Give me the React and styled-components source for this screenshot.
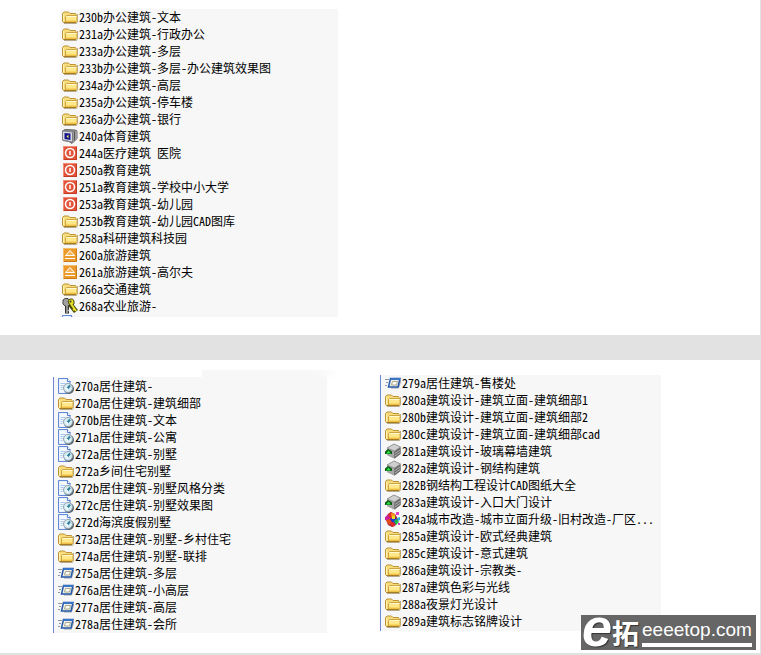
import React from "react";
import styled, { createGlobalStyle } from "styled-components";

const GlobalStyle = createGlobalStyle`
  * {
    box-sizing: border-box;
  }
  body {
    margin: 0;
    background-color: #ffffff;
  }
`;

const Page = styled.main`
  border-right: 1px solid #e2e2e2;
  border-bottom: 2px solid #e2e2e2;
  color: #000000;
  font-family: "Noto Sans Mono CJK SC", "Noto Sans CJK SC", monospace;
`;

const TopSection = styled.section`
  padding: 9px 60px 18px;
`;

const Divider = styled.div`
  height: 25px;
  background-color: #e2e2e2;
`;

const BottomSection = styled.section`
  position: relative;
  display: flex;
  align-items: flex-start;
  gap: 53px;
  padding: 10px 53px 20px;
`;

const Column = styled.div`
  flex: none;
  padding-top: ${(props) => props.$top || 0}px;
`;

const Strip = styled.div`
  width: 135px;
  height: 7px;
  margin: 0 -10px 0 auto;
  background: linear-gradient(to right, #f7f7f7 85%, #ffffff);
`;

const Panel = styled.ul`
  width: ${(props) => props.$width}px;
  margin: 0;
  padding: ${(props) => props.$pad};
  list-style: none;
  background-color: #f7f7f7;
  border-left: ${(props) => (props.$line ? "1px solid #6f86d6" : "none")};
`;

const Row = styled.li`
  display: flex;
  align-items: flex-start;
  gap: 1px;
  height: 17px;
  font-size: 12px;
  line-height: 16px;
  white-space: pre;
`;

const NextRow = styled.li`
  height: 2px;
  overflow: hidden;
`;

const Icon = styled.svg`
  display: block;
  flex: none;
  width: 16px;
  height: 16px;
`;

const Logo = styled.div`
  position: absolute;
  right: 4px;
  bottom: 3px;
  display: flex;
  align-items: center;
  gap: 3px;
  width: 175px;
  height: 35px;
  padding-left: 1px;
  background-color: #666666;
  color: #ffffff;
`;

const LogoMark = styled.span`
  width: 27px;
  font: italic bold 54px/36px "Liberation Sans", sans-serif;
  height: 48px;
  text-shadow: 1px 1px 1px #333333;
`;

const LogoHan = styled.span`
  font: bold 27px/35px "Noto Sans CJK SC", sans-serif;
  text-shadow: 1px 1px 1px #333333;
`;

const LogoUrl = styled.span`
  height: 29px;
  font: 19px/24px "Liberation Sans", sans-serif;
  border-bottom: 4px solid #ffffff;
`;

function Folder() {
  return (
    <Icon viewBox="0 0 16 16">
      <path d="M2 14.500h12.500l1-2V5" fill="none" stroke="#b5aa90" />
      <path d="M.5 12V4.500L2 3h4.500L8 4.500h5.500l.5 1V13l-1 .5H1.500l-1-1z" fill="#f7dc7c" stroke="#bd9235" />
      <path d="M1.500 5v7.500" stroke="#fff2b4" />
      <path d="M4.500 6.500H15V12l-1 1.500H3.500v-6z" fill="#ffe88a" stroke="#cfa544" />
      <path d="M4.500 7.500h10" stroke="#fff8cc" />
      <path d="M4 11.500h10.500" stroke="#f8d768" />
      <path d="M4 12.500h10" stroke="#efc048" />
      <path d="M1.500 13.500H14" stroke="#a67c20" />
    </Icon>
  );
}

function Monitor() {
  return (
    <Icon viewBox="0 0 16 16">
      <path d="M.5 3L3 1.500 13 2l2 1v7.500L10 15.500l-3-2-6-1z" fill="#8a8a8a" stroke="#666" />
      <path d="M10.500 4L15 3v8l-4.500 4z" fill="#9c9c9c" />
      <path d="M12.500 3.500v9" stroke="#555" />
      <path d="M.5 3L10.500 4v10l-10-2z" fill="#dcdce4" stroke="#808088" />
      <path d="M2.500 5l6 .5V12l-6-1z" fill="#14148c" />
      <path d="M6.500 6.500L4.500 8.500l2 2z" fill="#e8e04a" />
    </Icon>
  );
}

function Power() {
  return (
    <Icon viewBox="0 0 16 16">
      <rect x="1" y="1" width="14" height="14" rx="1" fill="#e2533a" />
      <path d="M1.500 14V1.500H14" stroke="#f08a72" fill="none" />
      <path d="M14.500 2v12.500H2" stroke="#c23a22" fill="none" />
      <circle cx="8" cy="8" r="4.500" fill="none" stroke="#fff" strokeWidth="1.500" />
      <path d="M8 6v4" stroke="#fff" strokeWidth="1.500" />
    </Icon>
  );
}

function Eject() {
  return (
    <Icon viewBox="0 0 16 16">
      <rect x="1" y="1" width="14" height="14" rx="1" fill="#eb9a2b" />
      <path d="M1.500 14V1.500H14" stroke="#f5bd6a" fill="none" />
      <path d="M14.500 2v12.500H2" stroke="#cc7a12" fill="none" />
      <path d="M8 3.500l4.500 5h-9z" fill="#f3b65c" stroke="#fff" />
      <path d="M3 11.500h10" stroke="#fff" />
    </Icon>
  );
}

function Keys() {
  return (
    <Icon viewBox="0 0 16 16">
      <path d="M5 5v10.500" stroke="#333" strokeWidth="4" />
      <path d="M1 2l2-1.500h3L8 3v3L6 8H3L1 6z" fill="#a0a0a0" stroke="#444" />
      <path d="M5 7v8M5 12.500h2" stroke="#aaa" strokeWidth="1.500" />
      <path d="M8 6l6 7.500" stroke="#4c480a" strokeWidth="5" />
      <path d="M6 2.500L8 1h2.500L12 3v3L9.500 7.500 7 6z" fill="#e0dc28" stroke="#4c480a" />
      <path d="M9 6l5 7M11 12l2-1.500" stroke="#e8e430" strokeWidth="2" />
      <circle cx="8.500" cy="3.500" r="1" fill="#333" />
    </Icon>
  );
}

function Report() {
  return (
    <Icon viewBox="0 0 16 16">
      <path d="M.5.500h9l2.500 3v12H.5z" fill="#dcebff" stroke="#6388d8" />
      <path d="M1.500 1.500h7v3h2v3l-5 7h-4z" fill="#f4f9ff" />
      <path d="M9.500.500v3h3" fill="#fff" stroke="#5b7fd0" />
      <path d="M2.500 5.500h5M2.500 7.500h3M2.500 9.500h2M2.500 11.500h2" stroke="#a8c6ee" />
      <circle cx="11" cy="11" r="5" fill="#59636c" />
      <circle cx="10" cy="10" r="4.500" fill="#d5edf4" stroke="#93a1ab" />
      <path d="M9.500 10.500L12 7.500" stroke="#2e7f9a" strokeWidth="2" />
      <path d="M7 10.500h2.500V13" stroke="#fff" fill="none" />
    </Icon>
  );
}

function RunWindow() {
  return (
    <Icon viewBox="0 0 16 16">
      <path d="M0 4.500h4M1 7.500h2M0 10.500h2" stroke="#8a98a8" />
      <path d="M6 13h7.500L16 5" fill="none" stroke="#9aa2aa" />
      <path d="M5.500 3.500h9.500l-2 8.500H3.500z" fill="#f0f0e6" stroke="#2458a8" strokeWidth="1.500" />
      <path d="M5.500 4H15" stroke="#3a74c8" strokeWidth="2" />
      <path d="M7.500 6.500h5l-1 3.500h-5z" fill="#fdfdf6" stroke="#a8a890" />
    </Icon>
  );
}

function Drive() {
  return (
    <Icon viewBox="0 0 16 16">
      <path d="M2 5l7-4 6.500 3v7l-6 4.500L2 12z" fill="#777" />
      <path d="M2 5l7-4 6.500 3L9.500 8z" fill="#d0d0d0" stroke="#9a9a9a" />
      <path d="M2 5.500L9.500 8.500v7L2 12z" fill="#a6a6a6" />
      <path d="M9.500 8.500l6-4V11l-6 4.500z" fill="#6a6a6a" />
      <path d="M10 10.500l5-3.500M10 13l5-3.500" stroke="#b5b5b5" />
      <path d="M0 11V8.500L3 6l4 2.500V11z" fill="#075c12" />
      <path d="M1 10.500L3.500 7.500 6 10.500z" fill="#2ee048" />
    </Icon>
  );
}

function Blocks() {
  return (
    <Icon viewBox="0 0 16 16">
      <path d="M2 4l4-3 4 2 3 5-2 6-4 2-4-2-2-5z" fill="#a02848" />
      <path d="M3 3l3-2 2 2v4L4 8z" fill="#e02828" />
      <path d="M0 6l3-2 2 3-2 3-3-1z" fill="#c81ea0" />
      <path d="M6 2l4 1v4L7 8z" fill="#ff9c20" />
      <path d="M1 9l4-1 2 4-3 2z" fill="#e84818" />
      <path d="M5 8l4-2 3 3-3 4z" fill="#2038d8" />
      <path d="M7 5h3v3H7z" fill="#e8e020" />
      <path d="M5 12l4-1 1 4-3 1z" fill="#e02828" />
      <path d="M9 10l3-2 2 3-3 3z" fill="#20b848" />
      <path d="M11 1h3v3h-3zM13 12h2v2h-2z" fill="#e040c8" />
      <path d="M12 7l3-1v3l-2 1z" fill="#28b4dc" />
    </Icon>
  );
}

const icons = {
  folder: Folder,
  monitor: Monitor,
  power: Power,
  eject: Eject,
  keys: Keys,
  report: Report,
  run: RunWindow,
  drive: Drive,
  blocks: Blocks,
};

const officeList = [
  ["folder", "230b办公建筑-文本"],
  ["folder", "231a办公建筑-行政办公"],
  ["folder", "233a办公建筑-多层"],
  ["folder", "233b办公建筑-多层-办公建筑效果图"],
  ["folder", "234a办公建筑-高层"],
  ["folder", "235a办公建筑-停车楼"],
  ["folder", "236a办公建筑-银行"],
  ["monitor", "240a体育建筑"],
  ["power", "244a医疗建筑 医院"],
  ["power", "250a教育建筑"],
  ["power", "251a教育建筑-学校中小大学"],
  ["power", "253a教育建筑-幼儿园"],
  ["folder", "253b教育建筑-幼儿园CAD图库"],
  ["folder", "258a科研建筑科技园"],
  ["eject", "260a旅游建筑"],
  ["eject", "261a旅游建筑-高尔夫"],
  ["folder", "266a交通建筑"],
  ["keys", "268a农业旅游-"],
];

const housingList = [
  ["report", "270a居住建筑-"],
  ["folder", "270a居住建筑-建筑细部"],
  ["report", "270b居住建筑-文本"],
  ["report", "271a居住建筑-公寓"],
  ["report", "272a居住建筑-别墅"],
  ["folder", "272a乡间住宅别墅"],
  ["report", "272b居住建筑-别墅风格分类"],
  ["report", "272c居住建筑-别墅效果图"],
  ["report", "272d海滨度假别墅"],
  ["folder", "273a居住建筑-别墅-乡村住宅"],
  ["folder", "274a居住建筑-别墅-联排"],
  ["run", "275a居住建筑-多层"],
  ["run", "276a居住建筑-小高层"],
  ["run", "277a居住建筑-高层"],
  ["run", "278a居住建筑-会所"],
];

const designList = [
  ["run", "279a居住建筑-售楼处"],
  ["folder", "280a建筑设计-建筑立面-建筑细部1"],
  ["folder", "280b建筑设计-建筑立面-建筑细部2"],
  ["folder", "280c建筑设计-建筑立面-建筑细部cad"],
  ["drive", "281a建筑设计-玻璃幕墙建筑"],
  ["drive", "282a建筑设计-钢结构建筑"],
  ["folder", "282B钢结构工程设计CAD图纸大全"],
  ["drive", "283a建筑设计-入口大门设计"],
  ["blocks", "284a城市改造-城市立面升级-旧村改造-厂区..."],
  ["folder", "285a建筑设计-欧式经典建筑"],
  ["folder", "285c建筑设计-意式建筑"],
  ["folder", "286a建筑设计-宗教类-"],
  ["folder", "287a建筑色彩与光线"],
  ["folder", "288a夜景灯光设计"],
  ["folder", "289a建筑标志铭牌设计"],
];

function FileList({ items, width, pad, line, more }) {
  return (
    <Panel $width={width} $pad={pad} $line={line}>
      {items.map(([icon, name]) => {
        const Glyph = icons[icon];
        return (
          <Row key={icon + name}>
            <Glyph />
            <span>{name}</span>
          </Row>
        );
      })}
      {more && (
        <NextRow>
          <Report />
        </NextRow>
      )}
    </Panel>
  );
}

function App() {
  return (
    <>
      <GlobalStyle />
      <Page>
        <TopSection>
          <FileList items={officeList} width={278} pad="0 0 0 2px" more />
        </TopSection>
        <Divider />
        <BottomSection>
          <Column>
            <Strip />
            <FileList items={housingList} width={274} pad="1px 0 0 4px" line />
          </Column>
          <Column $top={5}>
            <FileList items={designList} width={281} pad="0 0 1px 4px" line />
          </Column>
          <Logo>
            <LogoMark>e</LogoMark>
            <LogoHan>拓</LogoHan>
            <LogoUrl>eeeetop.com</LogoUrl>
          </Logo>
        </BottomSection>
      </Page>
    </>
  );
}

export default App;
